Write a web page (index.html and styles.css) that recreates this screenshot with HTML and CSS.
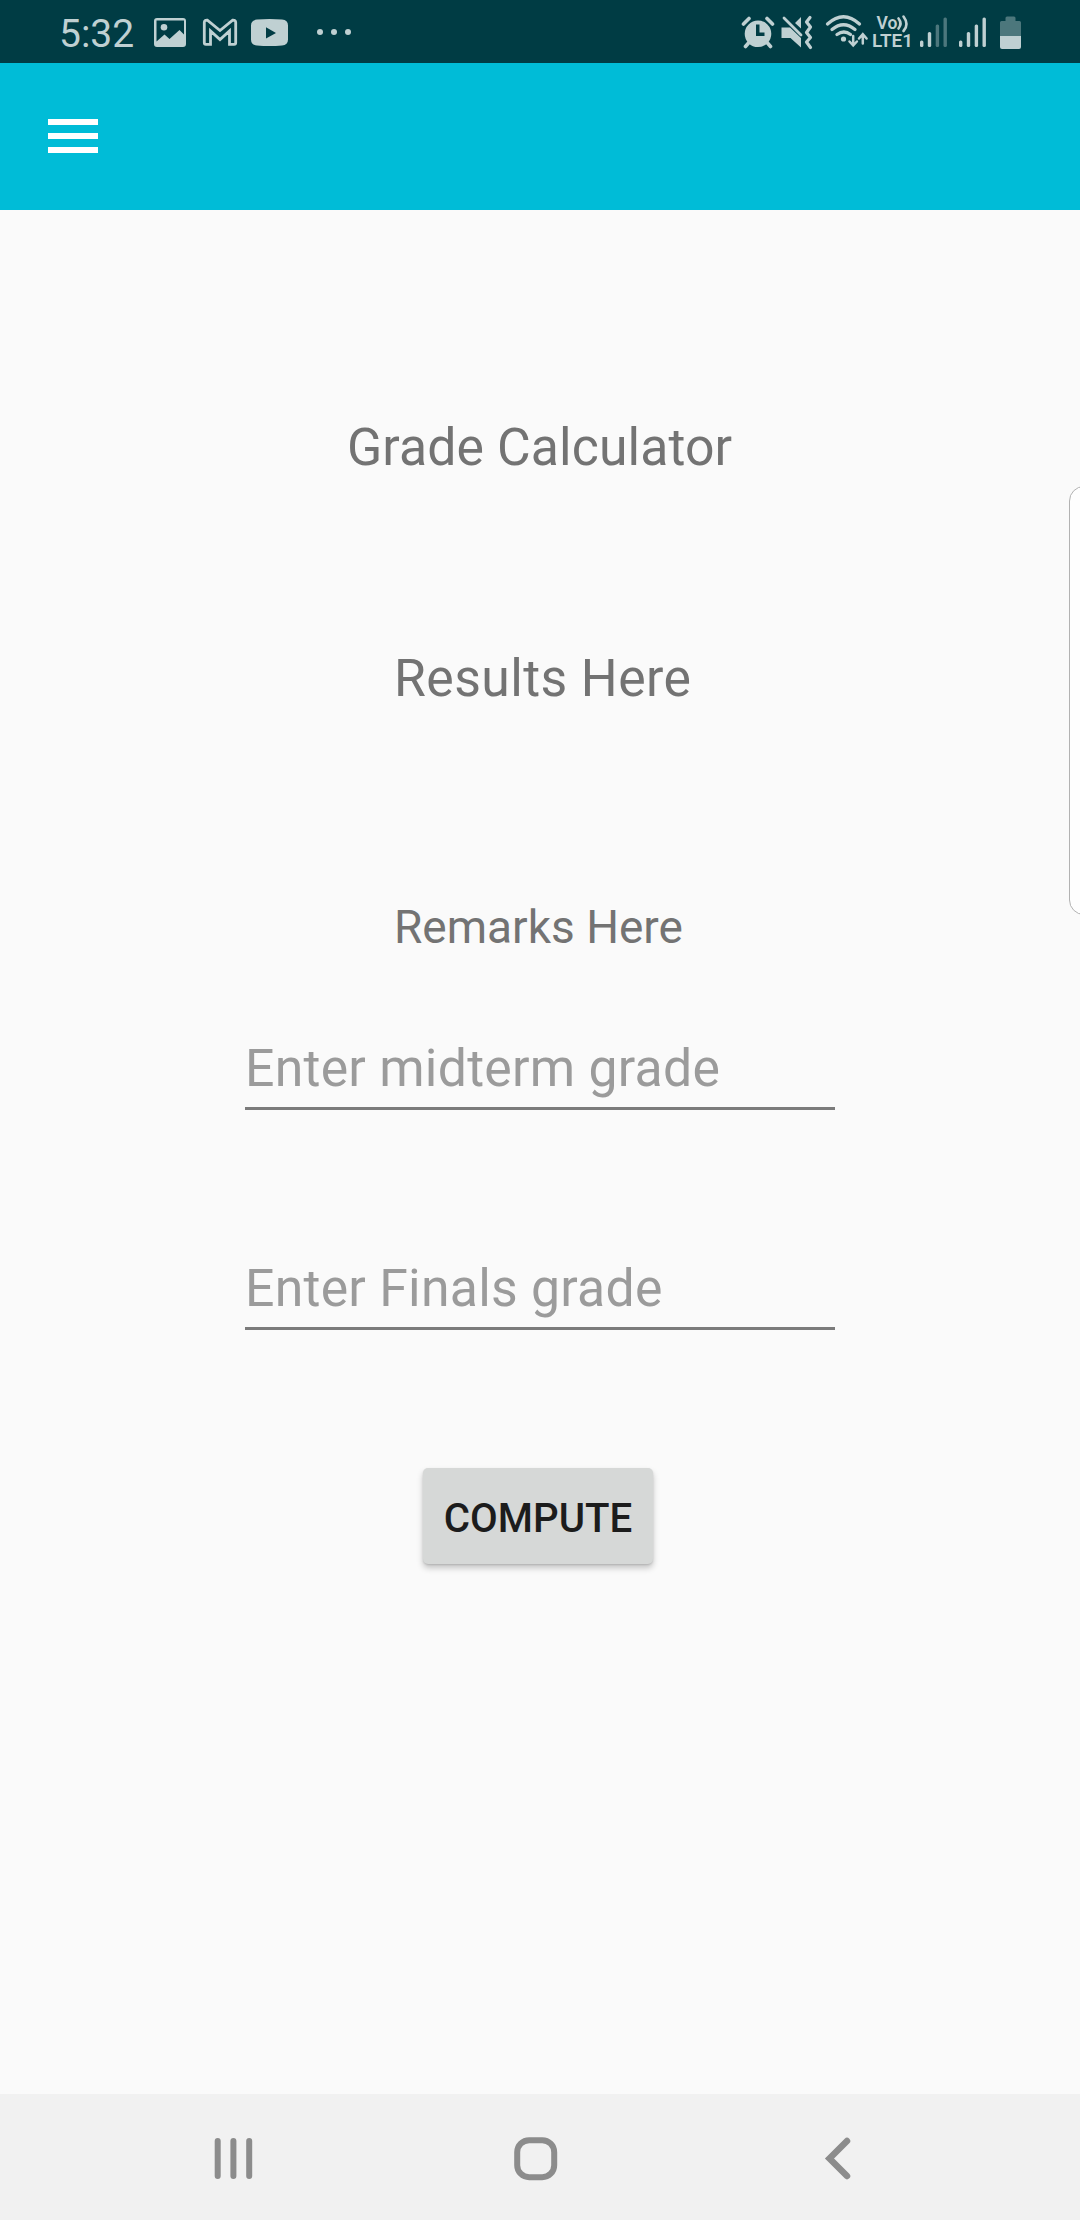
FILE: index.html
```html
<!DOCTYPE html>
<html lang="en">
<head>
<meta charset="utf-8">
<title>Grade Calculator</title>
<link rel="stylesheet" href="styles.css">
</head>
<body>
<div class="screen">
  <header class="status">
    <div class="status-left">
      <span class="clock">5:32</span>
      <svg width="44" height="63" viewBox="150 0 44 63"><path fill-rule="evenodd" d="M157 18h26q3 0 3 3v23q0 3-3 3h-26q-3 0-3-3v-23q0-3 3-3zM156.500 20.500v21l8-7 5 4.500 10-9 4.500 4.500v-14z"/><circle cx="164" cy="27.300" r="3.300"/></svg>
      <svg width="50" height="63" viewBox="194 0 50 63"><path class="line" stroke-width="2.800" d="M204.300 22.500q0-2.500 3-2.300l12.700 10.300 12.700-10.300q3-.2 3 2.300v20q0 1.800-1.600 1.800h-4.600v-13.300l-9.500 8.500-9.500-8.500v13.300h-4.600q-1.600 0-1.600-1.800z"/></svg>
      <svg width="54" height="63" viewBox="244 0 54 63"><path fill-rule="evenodd" d="M257 19.500q12.500-1 25 0 6 .5 6 6v14q0 5.500-6 6-12.500 1-25 0-6-.5-6-6v-14q0-5.500 6-6zM266 27.300v11.200l10-5.600z"/></svg>
      <svg width="60" height="63" viewBox="298 0 60 63"><circle cx="320" cy="32" r="3"/><circle cx="334" cy="32" r="3"/><circle cx="348" cy="32" r="3"/></svg>
    </div>
    <div class="status-right">
      <svg width="39" height="63" viewBox="739 0 39 63"><path fill-rule="evenodd" d="M758 20.500a13.300 13.300 0 1 1 0 26.600a13.300 13.300 0 1 1 0-26.600zM756 24.500v11.500h8.500v-3.500h-5v-8z"/><path class="line" stroke-width="3.600" d="M743.500 24l5.500-5.500M772.500 24l-5.500-5.500M748.500 43l-3 3.500M767.500 43l3 3.500"/></svg>
      <svg width="38" height="63" viewBox="778 0 38 63"><path d="M781.500 27.500h8.500l11 10.500v9.500l-10.500-9.500h-9zM801 17v11.500l-6-5.500z"/><path class="line" stroke-width="2.800" d="M784 18l17 17"/><path class="line" stroke-width="3.200" stroke-linejoin="round" d="M810 17.500l-3.500 4.500 4 5-4 5.500 4 5-4 4.500 4 5.500"/></svg>
      <svg width="55" height="63" viewBox="816 0 55 63"><g class="line" stroke-width="3.300"><path d="M827.500 24q16-14.500 32 0"/><path d="M832 29.500q11.500-9.500 23 0"/><path d="M837 34.500q7-5 13.500 0"/></g><circle cx="843.500" cy="39" r="2.600"/><path class="line" stroke-width="2.500" d="M853.200 36v8.500M849.500 41.500l3.700 4 3.700-4M862.800 43.500v-8M859 38.500l3.800-4.300 3.800 4.300"/></svg>
      <svg width="45" height="63" viewBox="871 0 45 63"><text class="net" x="876.500" y="29" font-size="17.500" textLength="21">Vo</text><path class="line" stroke-width="2.600" d="M898.500 18.500q4 5 0 10M903.500 16.500q6 8 0 14.500"/><text class="net" x="872" y="47" font-size="18.500" textLength="41" lengthAdjust="spacingAndGlyphs">LTE1</text></svg>
      <svg width="39" height="63" viewBox="916 0 39 63"><rect x="920" y="40.500" width="3.400" height="6.500" rx="1.500"/><rect x="927.800" y="32" width="3.400" height="15" rx="1.500"/><g opacity=".4"><rect x="935.700" y="24.500" width="3.400" height="22.500" rx="1.500"/><rect x="943.500" y="17.500" width="3.400" height="29.500" rx="1.500"/></g></svg>
      <svg width="39" height="63" viewBox="955 0 39 63"><rect x="959" y="40.500" width="3.400" height="6.500" rx="1.500"/><rect x="966.800" y="32" width="3.400" height="15" rx="1.500"/><rect x="974.700" y="24.500" width="3.400" height="22.500" rx="1.500"/><rect x="982.500" y="17.500" width="3.400" height="29.500" rx="1.500"/></svg>
      <svg width="31" height="63" viewBox="994 0 31 63"><path opacity=".4" d="M1000 36v-13.500q0-1.500 1.500-1.500h4v-3q0-1.500 1.500-1.500h7q1.500 0 1.500 1.500v3h4q1.500 0 1.500 1.500v13.500z"/><path d="M1000 36h21v11q0 2-2 2h-17q-2 0-2-2z"/></svg>
    </div>
  </header>
  <div class="appbar">
    <svg class="menu" width="50" height="34" viewBox="0 0 50 34"><path d="M0 0h50v6H0zM0 14h50v6H0zM0 28h50v6H0z"/></svg>
  </div>
  <main class="content">
    <h1 class="title">Grade Calculator</h1>
    <p class="results">Results Here</p>
    <p class="remarks">Remarks Here</p>
    <div class="field midterm">Enter midterm grade</div>
    <div class="field finals">Enter Finals grade</div>
    <button class="compute">COMPUTE</button>
    <div class="edge-handle"></div>
  </main>
  <nav class="navbar">
    <svg width="44" height="46" viewBox="211 2135 44 46"><path class="line" stroke-width="6" d="M217.700 2141v35M233.400 2141v35M249.200 2141v35"/></svg>
    <svg width="46" height="46" viewBox="512 2135 46 46"><rect class="line" stroke-width="6" x="517.200" y="2140.200" width="37" height="37" rx="12"/></svg>
    <svg width="34" height="46" viewBox="821 2135 34 46"><path class="line" stroke-width="6.500" d="M847 2141l-17.500 17.500 17.500 17.500"/></svg>
  </nav>
</div>
</body>
</html>
```
FILE: styles.css
```css
* { box-sizing: border-box; }
body { margin: 0; font-family: Roboto, sans-serif; }
svg { display: block; flex: none; }
.screen {
  width: 1080px;
  height: 2220px;
  display: flex;
  flex-direction: column;
  background: #fafafa;
  overflow: hidden;
}
.line { fill: none; stroke-linecap: round; }

.status {
  height: 63px;
  flex: none;
  display: flex;
  justify-content: space-between;
  padding: 0 55px 0 59px;
  background: #003c44;
  fill: #bfd0d2;
  color: #bfd0d2;
}
.status .line { stroke: #bfd0d2; }
.status-left, .status-right { display: flex; }
.clock { width: 91px; font-size: 39px; line-height: 69px; white-space: nowrap; }
.net { font-weight: 600; }

.appbar {
  height: 147px;
  flex: none;
  padding: 56px 48px 0;
  background: #00bcd7;
}
.menu { fill: #fff; }

.content {
  position: relative;
  flex: 1;
  display: flex;
  flex-direction: column;
  align-items: flex-start;
  color: #737373;
}
.title, .results, .field { font-size: 51.750px; line-height: 60px; font-weight: 400; white-space: nowrap; }
.title { margin: 208px 0 0 347px; letter-spacing: .1px; }
.results { margin: 171px 0 0 394px; letter-spacing: .4px; }
.remarks { margin: 191px 0 0 394px; font-size: 46px; line-height: 54px; white-space: nowrap; }
.field {
  width: 590px;
  height: 72px;
  margin-left: 245px;
  padding-top: 1px;
  border-bottom: 3px solid #7b7b7b;
  color: #9b9b9b;
  letter-spacing: .25px;
}
.midterm { margin-top: 84px; }
.finals { margin-top: 148px; }
.compute {
  width: 230px;
  height: 96px;
  margin: 138px 0 0 423px;
  padding: 6px 0 0;
  border: 0;
  border-radius: 5px;
  background: #d6d8d7;
  color: #1c1c1c;
  font: 500 40.250px/48px Roboto, sans-serif;
  box-shadow: 0 4px 6px rgba(0, 0, 0, .22), 0 1px 2px rgba(0, 0, 0, .12);
}
.edge-handle {
  position: absolute;
  top: 276px;
  right: -20px;
  width: 31px;
  height: 429px;
  border: 1.500px solid #b2b2b2;
  border-radius: 15px;
  background: #fefefe;
}

.navbar {
  height: 126px;
  flex: none;
  display: grid;
  grid-template-columns: 301px 309px 34px;
  padding: 41px 225px 0 211px;
  background: #f1f1f1;
}
.navbar .line { stroke: #8c8c8c; }
```
